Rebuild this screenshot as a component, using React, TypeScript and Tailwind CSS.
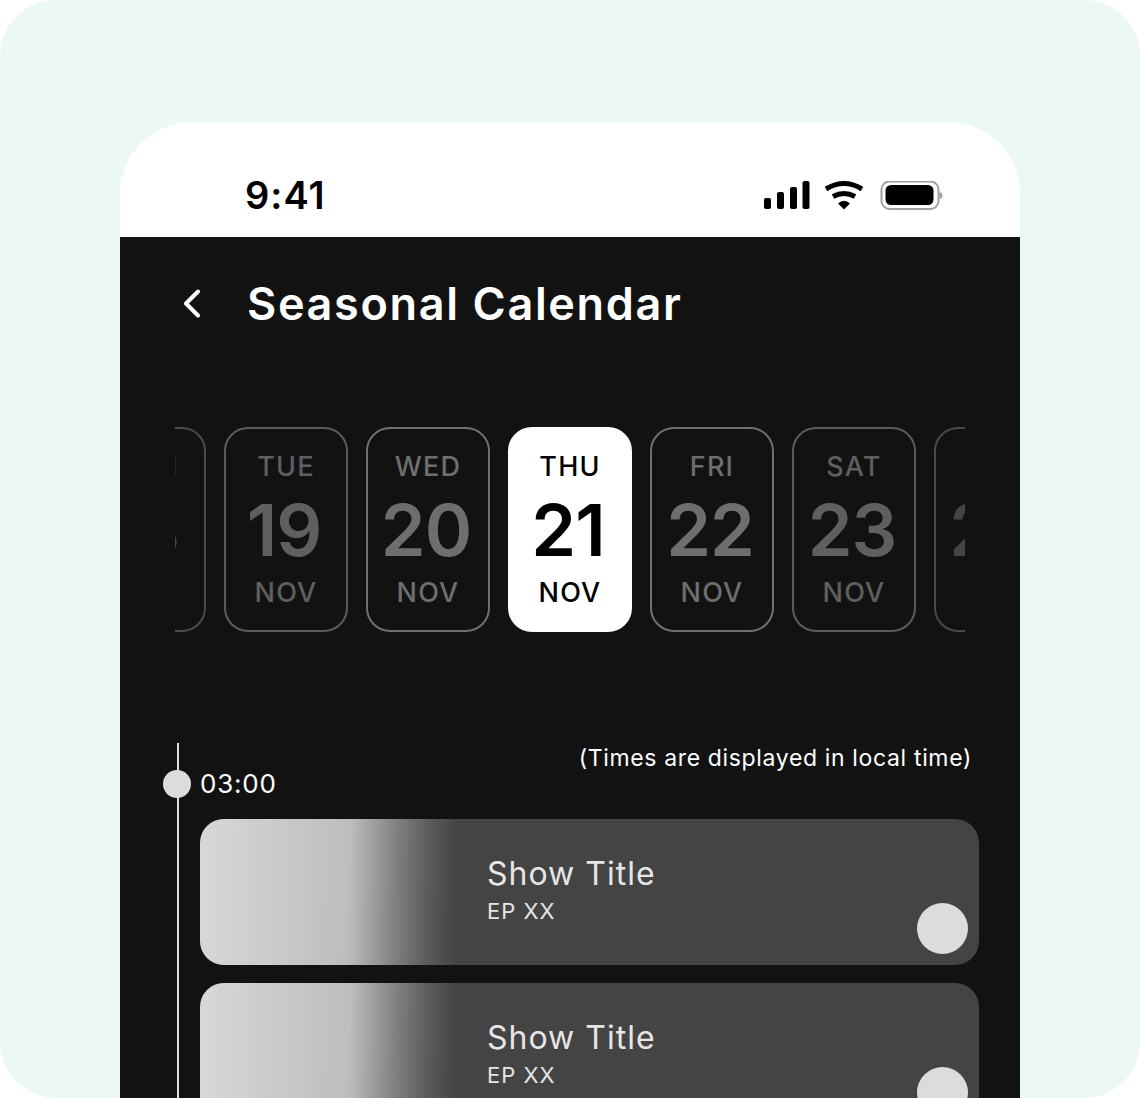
const days = [
  { dow: 'MON', num: '18', border: 'border-[#4a4a4a]', text: 'text-[#444444]' },
  { dow: 'TUE', num: '19', border: 'border-[#5c5c5c]', text: 'text-[#5f5f5f]' },
  { dow: 'WED', num: '20', border: 'border-[#707070]', text: 'text-[#6e6e6e]' },
  { dow: 'THU', num: '21', active: true, border: 'border-white', text: 'text-black' },
  { dow: 'FRI', num: '22', border: 'border-[#707070]', text: 'text-[#6e6e6e]' },
  { dow: 'SAT', num: '23', border: 'border-[#5c5c5c]', text: 'text-[#5f5f5f]' },
  { dow: 'SUN', num: '24', border: 'border-[#4a4a4a]', text: 'text-[#444444]' }
]

const StatusIcons = () => (
  <svg width="180" height="30" viewBox="0 0 180 30" fill="none">
    <rect x="0" y="17" width="7" height="11" rx="2" fill="#000" />
    <rect x="13" y="11" width="7" height="17" rx="2" fill="#000" />
    <rect x="26" y="6" width="7" height="22" rx="2" fill="#000" />
    <rect x="38.500" y="0" width="7" height="28" rx="2" fill="#000" />
    <path d="M62 8 Q80 -3 98 8" stroke="#000" strokeWidth="5" />
    <path d="M69 15.500 Q80 9.500 91 15.500" stroke="#000" strokeWidth="5" />
    <path d="M74 22.500 Q80 17 86 22.500 L80 28.500 Z" fill="#000" />
    <rect x="117.500" y="0.500" width="57" height="27.500" rx="8" stroke="#a0a0a0" strokeWidth="2" />
    <rect x="121.500" y="4" width="48" height="20" rx="5.500" fill="#000" />
    <path d="M175.500 11 C177.500 11.500 178.500 12.800 178.500 14.500 C178.500 16.200 177.500 17.500 175.500 18 Z" fill="#a0a0a0" />
  </svg>
)

const DayCard = ({ day }: { day: (typeof days)[number] }) => (
  <div
    className={`flex h-[205px] w-[124px] shrink-0 flex-col items-center rounded-[24px] border-2 ${day.border} ${day.active ? 'bg-white' : ''} ${day.text}`}
  >
    <div className="mt-[20px] text-[27px] leading-[36px] font-medium tracking-[1.2px]">{day.dow}</div>
    <div className="mt-[1px] pr-[4px] text-[72px] leading-[88px] font-semibold tracking-[-1px]">{day.num}</div>
    <div className="mt-[1px] text-[27px] leading-[36px] font-medium tracking-[1.2px]">NOV</div>
  </div>
)

const ShowCard = () => (
  <div className="relative flex h-[146px] w-[779px] shrink-0 overflow-hidden rounded-[24px] bg-[#444444]">
    <div className="h-full w-[257px] bg-[linear-gradient(91deg,#d8d8d8_0%,#bdbdbd_58%,#808080_76%,#5c5c5c_88%,#444444_99%)]" />
    <div className="ml-[30px] flex flex-col pt-[34px] text-[#e6e6e6]">
      <div className="text-[32px] leading-[42px] tracking-[1px]">Show Title</div>
      <div className="mt-[1px] text-[22px] leading-[30px] tracking-[1px]">EP XX</div>
    </div>
    <div className="absolute right-[11px] bottom-[11px] h-[51px] w-[51px] rounded-full bg-[#dcdcdc]" />
  </div>
)

export default function App() {
  return (
    <div className="h-[1098px] w-[1140px] overflow-hidden bg-white font-['Inter',sans-serif]">
      <div className="h-full rounded-[56px] bg-[#ebf8f5] px-[120px] pt-[122px]">
        <div className="flex h-[976px] flex-col overflow-hidden rounded-t-[72px] bg-white">
          {/* status bar */}
          <div className="flex h-[115px] shrink-0 items-start justify-between pt-[51px] pr-[76px] pl-[125px]">
            <div className="text-[38px] leading-[44px] font-semibold tracking-[1px] text-black">9:41</div>
            <div className="mt-[8px] ml-[1px]">
              <StatusIcons />
            </div>
          </div>

          <div className="flex-1 bg-[#121212]">
            {/* header */}
            <div className="flex h-[133px] items-center pl-[61px]">
              <svg width="20" height="30" viewBox="0 0 20 30" fill="none">
                <path d="M17 2.500 L5 14.500 L17 26.500" stroke="#fff" strokeWidth="4" strokeLinecap="round" strokeLinejoin="round" />
              </svg>
              <div className="ml-[46px] text-[45px] leading-[56px] font-semibold tracking-[1.65px] text-white">Seasonal Calendar</div>
            </div>

            {/* day strip */}
            <div className="mt-[57px] ml-[55px] flex w-[790px] gap-[18px] overflow-hidden">
              <div className="-ml-[93px] flex gap-[18px]">
                {days.map((day) => (
                  <DayCard key={day.num} day={day} />
                ))}
              </div>
            </div>

            {/* schedule */}
            <div className="mt-[111px] ml-[57px] flex flex-col border-l-2 border-[#e0e0e0] pl-[21px]">
              <div className="relative flex h-[76px] w-[779px] justify-between">
                <div className="absolute top-[27px] -left-[37px] h-[28px] w-[28px] rounded-full bg-[#dcdcdc]" />
                <div className="mt-[24px] text-[26px] leading-[34px] tracking-[0.8px] text-white">03:00</div>
                <div className="mr-[7px] text-[23px] leading-[30px] tracking-[0.65px] text-white">(Times are displayed in local time)</div>
              </div>
              <div className="flex flex-col gap-[18px]">
                <ShowCard />
                <ShowCard />
              </div>
            </div>
          </div>
        </div>
      </div>
    </div>
  )
}
